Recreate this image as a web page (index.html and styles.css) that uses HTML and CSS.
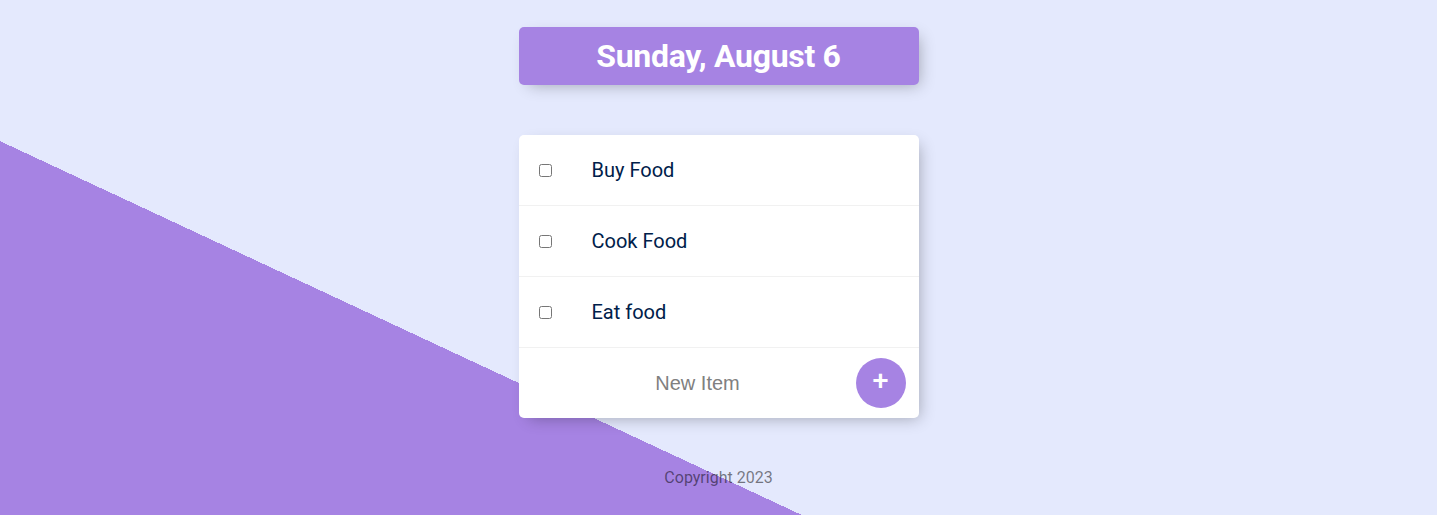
FILE: index.html
```html
<!DOCTYPE html>
<html lang="en">
<head>
<meta charset="utf-8">
<title>To-Do List</title>
<link rel="stylesheet" href="styles.css">
</head>
<body>
  <div class="box heading">
    <h1 class="title">Sunday, August 6</h1>
  </div>
  <div class="box list">
    <div class="item">
      <input class="check" type="checkbox">
      <p class="label">Buy Food</p>
    </div>
    <div class="item">
      <input class="check" type="checkbox">
      <p class="label">Cook Food</p>
    </div>
    <div class="item">
      <input class="check" type="checkbox">
      <p class="label">Eat food</p>
    </div>
    <form class="item new-form">
      <input class="new-input" type="text" placeholder="New Item" autocomplete="off">
      <button class="add-btn" type="button">+</button>
    </form>
  </div>
  <footer class="footer">Copyright 2023</footer>
</body>
</html>
```
FILE: styles.css
```css
html {
  height: 100%;
  background-color: #E4E9FD;
  background-image: linear-gradient(25deg, #A683E3 31.55%, #E4E9FD 31.55%);
  background-repeat: no-repeat;
  background-size: 100% 100%;
}

body {
  margin: 0;
  padding-top: 27px;
  font-family: Roboto, "Liberation Sans", sans-serif;
}

.box {
  width: 400px;
  margin: 0 auto 50px;
  background: #fff;
  border-radius: 5px;
  box-shadow: 5px 5px 15px -5px rgba(0, 0, 0, 0.3);
}

.heading {
  background-color: #A683E3;
  text-align: center;
}

.title {
  margin: 0;
  padding: 10px;
  color: #fff;
  font-size: 32px;
  font-weight: 700;
  line-height: 38px;
  letter-spacing: -0.3px;
}

.item {
  min-height: 70px;
  display: flex;
  align-items: center;
  border-bottom: 1px solid #F1F1F1;
}

.item:last-child {
  border-bottom: 0;
}

.check {
  margin: 20px;
  width: 13px;
  height: 13px;
}

.label {
  margin: 0;
  padding: 20px;
  font-size: 20px;
  font-weight: 400;
  color: #00204a;
}

.new-form {
  margin: 0 0 0 20px;
  height: 70px;
  justify-content: flex-start;
}

.new-input {
  box-sizing: border-box;
  width: 316px;
  height: 60px;
  margin-left: 1px;
  padding: 1px 2px;
  border: none;
  background: transparent;
  text-align: center;
  font-family: "Liberation Sans", Arial, sans-serif;
  font-size: 20px;
  color: #333;
}

.new-input::placeholder {
  color: grey;
  opacity: 1;
}

.new-input:focus {
  outline: none;
}

.add-btn {
  box-sizing: border-box;
  flex: none;
  width: 50px;
  height: 50px;
  margin-left: 0;
  border: 0;
  border-radius: 50%;
  background-color: #A683E3;
  color: #fff;
  font-family: "Liberation Sans", Arial, sans-serif;
  font-size: 28px;
  font-weight: 700;
  line-height: 1;
  padding: 0 0 5px;
}

.footer {
  text-align: center;
  color: rgba(0, 0, 0, 0.5);
  font-size: 16px;
  line-height: 19px;
}
```
